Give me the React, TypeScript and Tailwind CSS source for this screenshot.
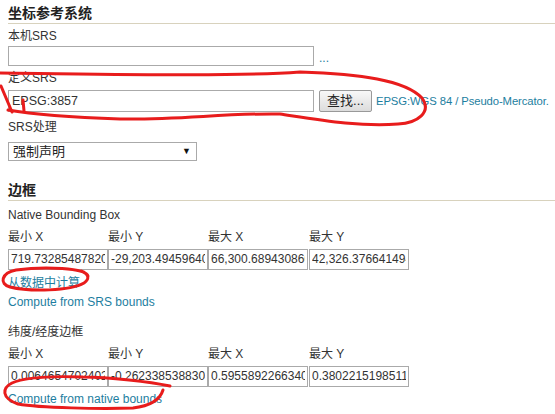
import React from "react";

const link = "text-[#1d7ea0]";

function Heading({ children, className = "" }: { children: React.ReactNode; className?: string }) {
  return (
    <div className={`h-[24px] pt-[4px] border-b border-[#d8d2bd] text-[14px] leading-[18px] font-bold text-[#222] ${className}`}>
      {children}
    </div>
  );
}

function Label({ children, className = "" }: { children: React.ReactNode; className?: string }) {
  return <div className={`text-[12px] leading-[16px] text-[#333] ${className}`}>{children}</div>;
}

function BoxInput({ value }: { value: string }) {
  return (
    <input
      readOnly
      defaultValue={value}
      className="h-[21px] w-[100px] border border-[#aaa] bg-white px-[2px] text-[12px] text-[#333] outline-none"
    />
  );
}

function BBox({ values }: { values: string[] }) {
  const labels = ["最小 X", "最小 Y", "最大 X", "最大 Y"];
  return (
    <div className="grid grid-cols-[100px_100px_101px_100px]">
      {labels.map((l) => (
        <div key={l} className="text-[12px] leading-[16px] text-[#333]">{l}</div>
      ))}
      {values.map((v, i) => (
        <div key={i} className="mt-[1px]">
          <BoxInput value={v} />
        </div>
      ))}
    </div>
  );
}

export default function App() {
  return (
    <div
      className="relative w-[555px] h-[414px] overflow-hidden bg-white"
      style={{ fontFamily: '"Liberation Sans", "Noto Sans CJK SC", sans-serif' }}
    >
      <div className="flex flex-col pl-[8px]">
        <Heading>坐标参考系统</Heading>

        <Label className="mt-[4px]">本机SRS</Label>
        <div className="mt-[2px] flex items-center gap-[5px]">
          <input readOnly className="h-[20px] w-[306px] shrink-0 border border-[#aaa] bg-white outline-none" />
          <span className={`${link} text-[12px] leading-[12px] pt-[4px]`}>...</span>
        </div>

        <Label className="mt-[4px]">定义SRS</Label>
        <div className="mt-[4px] flex items-center whitespace-nowrap">
          <input
            readOnly
            defaultValue="EPSG:3857"
            className="h-[22px] w-[306px] shrink-0 border border-[#aaa] bg-white px-[3px] text-[12.5px] text-[#333] outline-none"
          />
          <button className="ml-[5px] h-[22px] w-[53px] shrink-0 rounded-[2px] border border-[#999] bg-gradient-to-b from-[#f8f8f8] to-[#dcdcdc] text-[13px] text-[#222]">
            查找...
          </button>
          <span className={`${link} ml-[4px] shrink-0 text-[11.3px] tracking-[-0.1px]`}>EPSG:WGS 84 / Pseudo-Mercator.</span>
        </div>

        <Label className="mt-[7px]">SRS处理</Label>
        <div className="mt-[7px] flex h-[19px] w-[189px] items-center justify-between border border-[#aaa] bg-white pl-[4px] pr-[5px]">
          <span className="text-[13px] leading-[17px] text-[#222]">强制声明</span>
          <span className="text-[9px] text-[#111]">▼</span>
        </div>

        <Heading className="mt-[16px]">边框</Heading>
        <Label className="mt-[6px]">Native Bounding Box</Label>
        <div className="mt-[6px]">
          <BBox values={["719.73285487820215", "-29,203.494596403", "66,300.689430860", "42,326.376641494"]} />
        </div>
        <div className={`${link} mt-[5px] text-[12px] leading-[16px]`}>从数据中计算</div>
        <div className={`${link} mt-[3px] text-[12px] leading-[16px]`}>Compute from SRS bounds</div>

        <Label className="mt-[14px]">纬度/经度边框</Label>
        <div className="mt-[6px]">
          <BBox values={["0.006465470240206", "-0.2623385388307", "0.5955892266340405", "0.380221519851166"]} />
        </div>
        <div className={`${link} mt-[4px] text-[12px] leading-[16px]`}>Compute from native bounds</div>
      </div>

      <svg className="pointer-events-none absolute left-0 top-0" width="555" height="414" viewBox="0 0 555 414">
        <g fill="none" stroke="#e81c1c" strokeWidth="3" strokeLinecap="round" strokeLinejoin="round">
          <path d="M0 73 C100 74 230 77 300 72 C360 74 405 80 422 98 C432 112 418 123 398 124 C360 127 320 120 280 114 C225 113 180 120 120 119 C60 117 25 113 8 110" />
          <path d="M1 86 L12 112" />
          <path d="M23 100 L24 111" />
          <path d="M88 276 C86 268 45 266 16 270 C1 273 -1 284 10 287 C30 292 70 291 84 283 C90 279 89 274 81 271" />
          <path d="M170 386 C150 382 110 377 83 377 C55 376 25 377 12 383 C2 388 1 398 18 404 C40 408 100 409 133 408 C150 406 160 400 163 390" />
        </g>
      </svg>
    </div>
  );
}
